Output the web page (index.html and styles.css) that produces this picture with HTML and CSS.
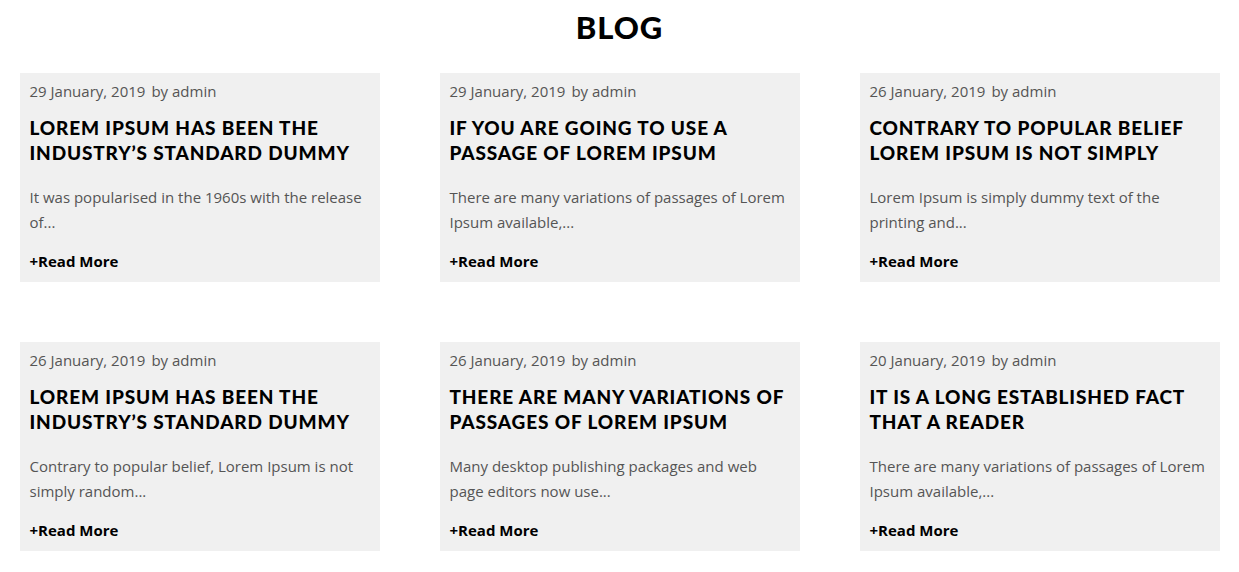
FILE: index.html
```html
<!DOCTYPE html>
<html lang="en">
<head>
<meta charset="utf-8">
<title>Blog</title>
<link rel="stylesheet" href="styles.css">
</head>
<body>
<section class="blog">
  <h1 class="blog-title">BLOG</h1>
  <div class="grid">
    <article class="card">
      <div class="meta"><span class="date">29 January, 2019</span><span>by admin</span></div>
      <h2 class="card-title">Lorem Ipsum has been the industry’s standard dummy</h2>
      <p class="excerpt">It was popularised in the 1960s with the release of...</p>
      <a class="more" href="#">+Read More</a>
    </article>
    <article class="card">
      <div class="meta"><span class="date">29 January, 2019</span><span>by admin</span></div>
      <h2 class="card-title">If you are going to use a passage of Lorem Ipsum</h2>
      <p class="excerpt">There are many variations of passages of Lorem Ipsum available,...</p>
      <a class="more" href="#">+Read More</a>
    </article>
    <article class="card">
      <div class="meta"><span class="date">26 January, 2019</span><span>by admin</span></div>
      <h2 class="card-title">Contrary to popular belief Lorem Ipsum is not simply</h2>
      <p class="excerpt">Lorem Ipsum is simply dummy text of the printing and...</p>
      <a class="more" href="#">+Read More</a>
    </article>
    <article class="card">
      <div class="meta"><span class="date">26 January, 2019</span><span>by admin</span></div>
      <h2 class="card-title">Lorem Ipsum has been the industry’s standard dummy</h2>
      <p class="excerpt">Contrary to popular belief, Lorem Ipsum is not simply random...</p>
      <a class="more" href="#">+Read More</a>
    </article>
    <article class="card">
      <div class="meta"><span class="date">26 January, 2019</span><span>by admin</span></div>
      <h2 class="card-title">There are many variations of passages of Lorem Ipsum</h2>
      <p class="excerpt">Many desktop publishing packages and web page editors now use...</p>
      <a class="more" href="#">+Read More</a>
    </article>
    <article class="card">
      <div class="meta"><span class="date">20 January, 2019</span><span>by admin</span></div>
      <h2 class="card-title">It is a long established fact that a reader</h2>
      <p class="excerpt">There are many variations of passages of Lorem Ipsum available,...</p>
      <a class="more" href="#">+Read More</a>
    </article>
  </div>
</section>
</body>
</html>
```

FILE: styles.css
```css
* { box-sizing: border-box; }
body {
  margin: 0;
  background: #ffffff;
  font-family: "Open Sans", "Liberation Sans", sans-serif;
  color: #555555;
}
.blog {
  width: 1200px;
  margin: 0 auto;
}
.blog-title {
  margin: 0;
  padding-top: 8px;
  height: 73px;
  text-align: center;
  font-family: "Lato", "Liberation Sans", sans-serif;
  font-weight: 900;
  font-size: 31px;
  line-height: 38px;
  letter-spacing: 1px;
  color: #000000;
}
.grid {
  display: grid;
  grid-template-columns: repeat(3, 360px);
  column-gap: 60px;
  row-gap: 60px;
}
.card {
  background: #f0f0f0;
  padding: 9px 10px 8px;
}
.meta {
  font-size: 15px;
  line-height: 18px;
  color: #555555;
}
.date {
  margin-right: 6px;
}
.card-title {
  margin: 15px 0 0;
  font-family: "Lato", "Liberation Sans", sans-serif;
  font-weight: 900;
  font-size: 19px;
  line-height: 25px;
  letter-spacing: 0.85px;
  text-transform: uppercase;
  color: #000000;
}
.excerpt {
  margin: 20px 0 0;
  font-size: 15px;
  line-height: 25px;
  color: #555555;
}
.more {
  display: block;
  margin-top: 14px;
  font-size: 15px;
  line-height: 25px;
  font-weight: 700;
  color: #000000;
  text-decoration: none;
}
```
